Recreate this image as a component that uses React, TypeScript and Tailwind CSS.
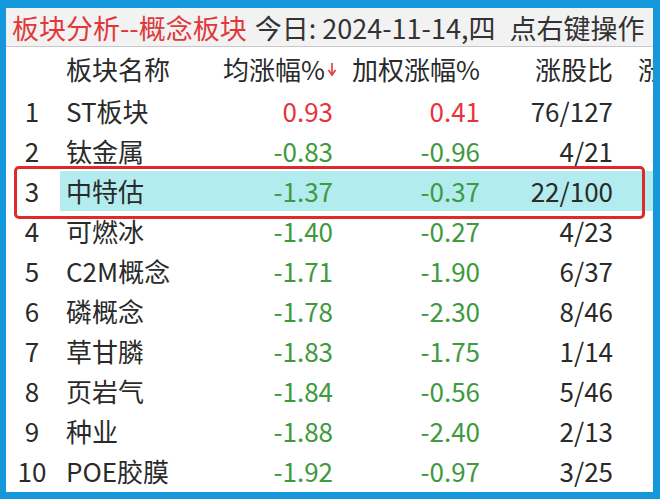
const rows = [
  { n: '1', name: 'ST板块', a: '0.93', b: '0.41', r: '76/127' },
  { n: '2', name: '钛金属', a: '-0.83', b: '-0.96', r: '4/21' },
  { n: '3', name: '中特估', a: '-1.37', b: '-0.37', r: '22/100' },
  { n: '4', name: '可燃冰', a: '-1.40', b: '-0.27', r: '4/23' },
  { n: '5', name: 'C2M概念', a: '-1.71', b: '-1.90', r: '6/37' },
  { n: '6', name: '磷概念', a: '-1.78', b: '-2.30', r: '8/46' },
  { n: '7', name: '草甘膦', a: '-1.83', b: '-1.75', r: '1/14' },
  { n: '8', name: '页岩气', a: '-1.84', b: '-0.56', r: '5/46' },
  { n: '9', name: '种业', a: '-1.88', b: '-2.40', r: '2/13' },
  { n: '10', name: 'POE胶膜', a: '-1.92', b: '-0.97', r: '3/25' },
]

const font = { fontFamily: '"Noto Sans CJK SC", "Noto Sans", sans-serif' }
const cols = 'grid grid-cols-[54px_170px_103px_147px_133px_1fr]'

function tone(v: string) {
  return v.startsWith('-') ? 'text-[#3d9a3d]' : 'text-[#e8333a]'
}

export default function App() {
  return (
    <div className="w-[660px] h-[499px] bg-[#1597dc] pt-[8px] pl-[6px] pr-[7px] pb-[7px]" style={font}>
      <div className="w-full h-full bg-white overflow-hidden flex flex-col">
        {/* title bar */}
        <div className="h-[39px] bg-[#f2f2f2] border-b border-[#c8c8c8] flex items-center pl-[6px] text-[27px] leading-none whitespace-nowrap">
          <span className="text-[#e0393a]">板块分析--概念板块</span>
          <span className="text-[#333] ml-[8px]">今日: 2024-11-14,四</span>
          <span className="text-[#333] ml-[14px]">点右键操作</span>
        </div>
        {/* header */}
        <div className={`${cols} h-[44px] items-center text-[26px] text-[#2a2a2a] leading-none whitespace-nowrap`}>
          <div />
          <div className="pl-[6px]">板块名称</div>
          <div className="flex justify-end items-center">
            <span>均涨幅%</span>
            <svg width="10" height="20" viewBox="0 0 10 20" className="shrink-0 ml-[2px] mr-[-4px]">
              <path d="M5 4 V15" stroke="#e0393a" strokeWidth="1.6" />
              <path d="M1.5 11 L5 16 L8.5 11" stroke="#e0393a" strokeWidth="1.6" fill="none" />
            </svg>
          </div>
          <div className="text-right">加权涨幅%</div>
          <div className="text-right">涨股比</div>
          <div className="pl-[25px] overflow-hidden">涨</div>
        </div>
        {rows.map((row) => (
          <div key={row.n} className={`${cols} h-[40px] items-center text-[26px] leading-none whitespace-nowrap relative`}>
            <div className="text-center text-[#2a2a2a] pr-[2px]">{row.n}</div>
            <div className={`col-span-5 h-full grid grid-cols-[170px_103px_147px_133px_1fr] items-center ${row.n === '3' ? 'bg-[#b3ecef]' : ''}`}>
              <div className="pl-[6px] text-[#2a2a2a]">{row.name}</div>
              <div className={`text-right ${tone(row.a)}`}>{row.a}</div>
              <div className={`text-right ${tone(row.b)}`}>{row.b}</div>
              <div className="text-right text-[#2a2a2a]">{row.r}</div>
              <div />
            </div>
            {row.n === '3' && (
              <div className="absolute left-[8px] right-[8px] top-[-5px] bottom-[-8px] border-[3px] border-[#e02a2a] rounded-[5px]" />
            )}
          </div>
        ))}
      </div>
    </div>
  )
}
